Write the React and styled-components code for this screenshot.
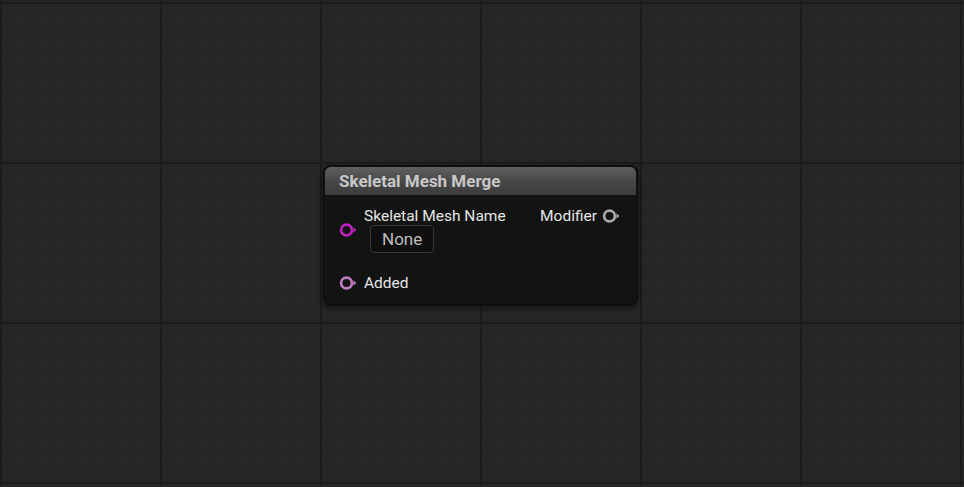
import React from "react";
import styled, { createGlobalStyle } from "styled-components";

const GlobalStyle = createGlobalStyle`
  html, body {
    margin: 0;
    padding: 0;
    background: #262626;
    overflow: hidden;
  }
  body {
    font-family: Roboto, "Noto Sans", sans-serif;
  }
`;

const Canvas = styled.div`
  position: relative;
  width: 964px;
  height: 487px;
  background-color: #262626;
  background-image:
    linear-gradient(to right, #1c1c1c 0 2px, transparent 2px),
    linear-gradient(to bottom, #1c1c1c 0 2px, transparent 2px),
    linear-gradient(to right, #2b2b2b 0 1px, transparent 1px),
    linear-gradient(to bottom, #2b2b2b 0 1px, transparent 1px);
  background-size: 160px 160px, 160px 160px, 20px 20px, 20px 20px;
  background-position: 0px 0px, 0px 2px, 1px 0px, 0px 3px;
`;

const Node = styled.div`
  position: absolute;
  left: ${(p) => p.x}px;
  top: ${(p) => p.y}px;
  width: 315px;
  box-sizing: border-box;
  background: #121412;
  border: 1px solid #0b0b0b;
  border-radius: 7px;
  box-shadow: 0 3px 6px rgba(0, 0, 0, 0.55);
  overflow: hidden;
`;

const Header = styled.div`
  height: 28px;
  margin: 1px 1px 0;
  border-radius: 6px 6px 0 0;
  background: linear-gradient(to bottom, #606060 0%, #4a4a4a 45%, #3b3b3b 100%);
  display: flex;
  align-items: center;
  padding-left: 14px;
  color: #c8c8c8;
  font-size: 17px;
  font-weight: 700;
`;

const Body = styled.div`
  display: flex;
  justify-content: space-between;
  padding: 12px 17px 12px 15px;
`;

const Column = styled.div`
  display: flex;
  flex-direction: column;
  gap: ${(p) => p.gap || 0}px;
`;

const PinRow = styled.div`
  display: flex;
  align-items: center;
  gap: ${(p) => p.gap}px;
`;

const Field = styled.div`
  display: flex;
  flex-direction: column;
  align-items: flex-start;
`;

const Label = styled.div`
  color: #e6e6e6;
  font-size: 15.5px;
  line-height: 18px;
  white-space: nowrap;
`;

const ValueBox = styled.div`
  margin: 0 0 0 6px;
  height: 28px;
  padding: 0 11px;
  box-sizing: border-box;
  display: flex;
  align-items: center;
  border: 1px solid #383838;
  border-radius: 4px;
  background: #0f0f0f;
  color: #bdbdbd;
  font-size: 17px;
`;

const Pin = ({ color }) => (
  <svg width="18" height="14" viewBox="0 0 18 14">
    <circle cx="7.5" cy="7" r="5.4" fill="none" stroke={color} strokeWidth="2.7" />
    <path d="M14.4 4.3 L17.4 7 L14.4 9.7 Z" fill={color} />
  </svg>
);

export default function App() {
  return (
    <>
      <GlobalStyle />
      <Canvas>
        <Node x={323} y={165}>
          <Header>Skeletal Mesh Merge</Header>
          <Body>
            <Column gap={21}>
              <PinRow gap={7}>
                <Pin color="#c21fc2" />
                <Field>
                  <Label>Skeletal Mesh Name</Label>
                  <ValueBox>None</ValueBox>
                </Field>
              </PinRow>
              <PinRow gap={7}>
                <Pin color="#c07ac0" />
                <Label>Added</Label>
              </PinRow>
            </Column>
            <Column>
              <PinRow gap={5}>
                <Label>Modifier</Label>
                <Pin color="#a8a8a8" />
              </PinRow>
            </Column>
          </Body>
        </Node>
      </Canvas>
    </>
  );
}
